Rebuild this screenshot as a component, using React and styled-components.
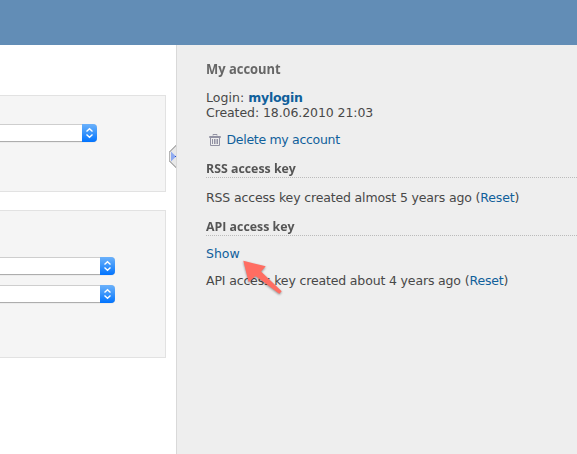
import React from "react";
import styled, { createGlobalStyle } from "styled-components";

const GlobalStyle = createGlobalStyle`
  * { box-sizing: border-box; }
  body { margin: 0; overflow: hidden; background: #fff; }
`;

const Page = styled.div`
  display: flex;
  flex-direction: column;
  width: 577px;
  height: 454px;
  overflow: hidden;
  color: #484848;
  font: 12.5px/15px Verdana, "DejaVu Sans", sans-serif;
`;
const Header = styled.header`
  flex: 0 0 45px;
  background: #628db6;
`;
const Columns = styled.div`
  display: flex;
  flex: 1;
`;
const Content = styled.main`
  position: relative;
  display: flex;
  flex-direction: column;
  gap: 18px;
  width: 176px;
  padding-top: 50px;
  background: #fff;
`;
const Fieldset = styled.section`
  display: flex;
  flex-direction: column;
  gap: 10px;
  width: 166px;
  height: ${(p) => p.$height}px;
  padding-top: ${(p) => p.$top}px;
  border: 1px solid #e2e2e2;
  border-left: 0;
  background: #f5f5f5;
`;
const Select = styled.div`
  display: flex;
  justify-content: flex-end;
  width: ${(p) => p.$width}px;
  height: 18px;
  border-radius: 0 4px 4px 0;
  background: #fff;
  box-shadow: inset 0 1px #cecece, inset 0 -1px #adadad, 0 1px #ececec;
`;
const Stepper = styled.span`
  width: 15px;
  height: 18px;
  border-radius: 0 4px 4px 0;
  background: linear-gradient(#6bb1fb, #3f98fb 45%, #0073ff);
  svg { display: block; }
`;
const Collapse = styled.span`
  position: absolute;
  top: 100px;
  right: 0;
  width: 7px;
  height: 23px;
  svg { display: block; }
`;
const Sidebar = styled.aside`
  position: relative;
  flex: 1;
  padding: 15px 0 0 29px;
  border-left: 1px solid #d9d9d9;
  background: #eee;
`;
const Title = styled.h3`
  height: 30px;
  margin: 0;
  color: #666;
  font: bold 14px/17px "Trebuchet MS", "Open Sans", sans-serif;
  span { display: inline-block; transform: scaleX(0.925); transform-origin: left; }
`;
const SectionTitle = styled.h4`
  height: 17px;
  margin: 0 0 ${(p) => p.$after}px;
  border-bottom: 1px dotted #bbb;
  color: #555;
  font: bold 13px/14px "Trebuchet MS", "Open Sans", sans-serif;
  span { display: inline-block; transform: scaleX(0.95); transform-origin: left; }
`;
const Line = styled.p`
  height: 15px;
  margin: 0 0 ${(p) => p.$after || 0}px;
  white-space: nowrap;
  letter-spacing: ${(p) => p.$spacing || 0}px;
`;
const Link = styled.a`
  color: #10609b;
  font-weight: ${(p) => (p.$bold ? "bold" : "normal")};
  letter-spacing: ${(p) => (p.$bold ? "-0.25px" : "inherit")};
`;
const DeleteRow = styled.div`
  display: flex;
  align-items: center;
  gap: 6px;
  height: 15px;
  margin: 12px 0 14px;
  padding-left: 2.5px;
  letter-spacing: -0.3px;
`;
const Pointer = styled.svg`
  position: absolute;
  left: 63px;
  top: 213px;
  filter: drop-shadow(0 1px 1px #0006);
`;

const SelectField = ({ width }) => (
  <Select $width={width}>
    <Stepper>
      <svg width="15" height="18" fill="none" stroke="#fff" strokeWidth="1.4">
        <path d="M4.5 7.5 7.5 4.7 10.5 7.5M4.5 10.5 7.5 13.3 10.5 10.5" />
      </svg>
    </Stepper>
  </Select>
);

const TrashIcon = () => (
  <svg width="12" height="12" fill="none" stroke="#9292a3">
    <path d="M4 1.5V.5h4v1M.5 3.5v-1h11v1zM1.5 4v7.5h9V4M3.5 5v5M5.5 5v5M7 5v5M8.5 5v5" />
  </svg>
);

export default function App() {
  return (
    <>
      <GlobalStyle />
      <Page>
        <Header />
        <Columns>
          <Content>
            <Fieldset $height={97} $top={28}>
              <SelectField width={97} />
            </Fieldset>
            <Fieldset $height={148} $top={46}>
              <SelectField width={115} />
              <SelectField width={115} />
            </Fieldset>
            <Collapse>
              <svg width="7" height="23">
                <path d="M7 0 0 7v9l7 7z" fill="#e8e8e8" />
                <path d="M7 .5.5 7v9L7 22.5" fill="none" stroke="#b5b5b5" shapeRendering="crispEdges" />
                <path d="M2 6.5v10l5-5z" fill="#8faaf0" />
                <path d="M6 11h1v1H6z" fill="#2448cc" />
              </svg>
            </Collapse>
          </Content>
          <Sidebar>
            <Title><span>My account</span></Title>
            <Line $spacing={0.05}>Login: <Link $bold>mylogin</Link></Line>
            <Line $spacing={-0.08}>Created: 18.06.2010 21:03</Line>
            <DeleteRow>
              <TrashIcon />
              <Link>Delete my account</Link>
            </DeleteRow>
            <SectionTitle $after={12}><span>RSS access key</span></SectionTitle>
            <Line $after={14} $spacing={-0.15}>RSS access key created almost 5 years ago (<Link>Reset</Link>)</Line>
            <SectionTitle $after={10}><span>API access key</span></SectionTitle>
            <Line $after={12}><Link>Show</Link></Line>
            <Line $spacing={-0.15}>API access key created about 4 years ago (<Link>Reset</Link>)</Line>
            <Pointer width="48" height="42">
              <path d="M3.3 2.7 25.7 8.3 21 13.5 41.7 33.3 39.3 35.7 15.5 18 8.7 24.3Z" fill="#ff6d62" />
            </Pointer>
          </Sidebar>
        </Columns>
      </Page>
    </>
  );
}
